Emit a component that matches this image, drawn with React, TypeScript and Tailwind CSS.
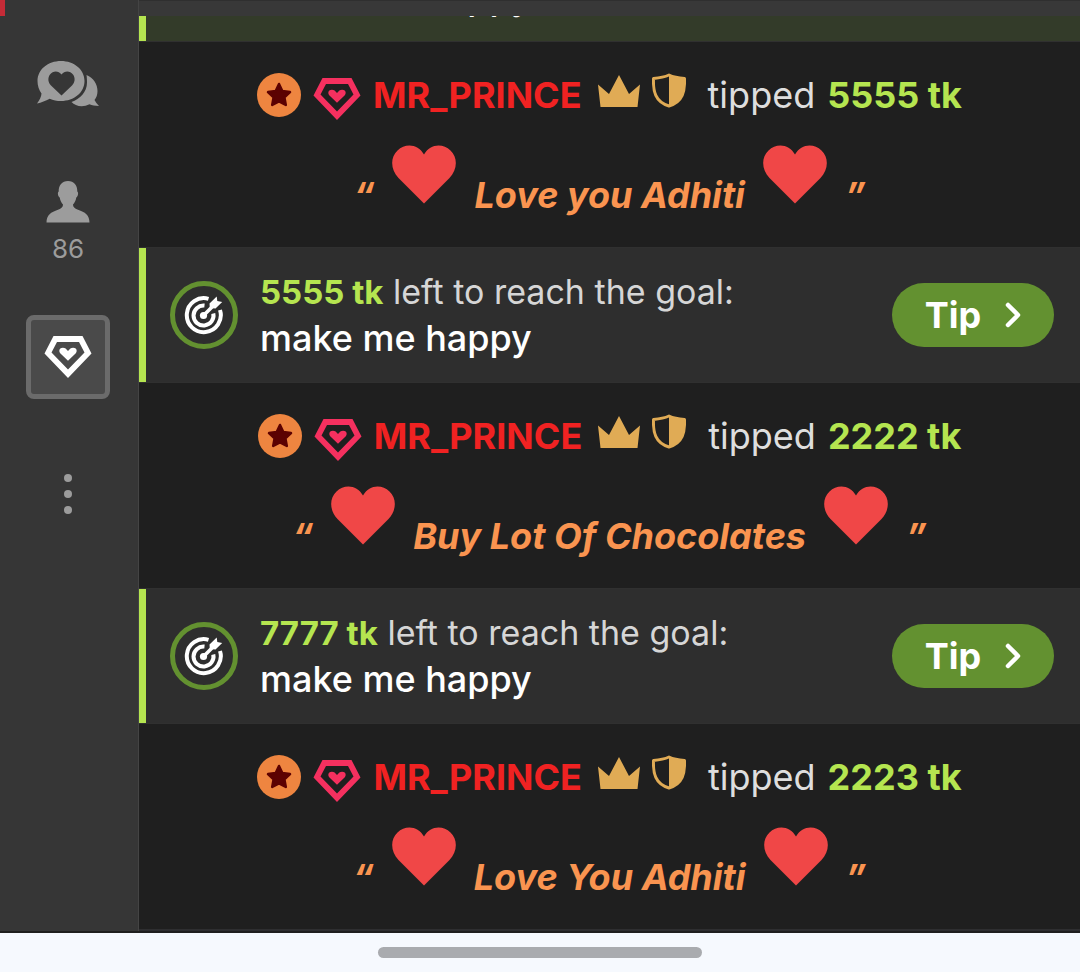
interface Tip {
  kind: "tip";
  id: number;
  user: string;
  amount: number;
  message: string;
}

interface Goal {
  kind: "goal";
  id: number;
  left: number;
  title: string;
  highlighted?: boolean;
}

type FeedItem = Tip | Goal;

const feed: FeedItem[] = [
  { kind: "goal", id: 1, left: 9999, title: "make me happy", highlighted: true },
  { kind: "tip", id: 2, user: "MR_PRINCE", amount: 5555, message: "Love you Adhiti" },
  { kind: "goal", id: 3, left: 5555, title: "make me happy" },
  { kind: "tip", id: 4, user: "MR_PRINCE", amount: 2222, message: "Buy Lot Of Chocolates" },
  { kind: "goal", id: 5, left: 7777, title: "make me happy" },
  { kind: "tip", id: 6, user: "MR_PRINCE", amount: 2223, message: "Love You Adhiti" },
];

function ChatIcon() {
  return (
    <svg width="62" height="46" viewBox="0 0 62 46" fill="currentColor" aria-hidden="true">
      <path d="M49.500 14C56.500 17 60.500 23 60.500 30C60.500 33.500 59.500 36.500 57.500 39C58.500 41 60 43 62 45C58 44.800 55 44.500 52.500 43.300C46 46.500 38.500 45.500 34.500 41C43 38 50 31 50 21.500C50 19 49.900 17 49.500 14Z" />
      <path
        fillRule="evenodd"
        d="M24 0C37 0 47.500 8.500 47.500 20C47.500 31.500 37 40 24 40C20 40 16 39.300 12.700 37.700C8.500 39.800 4.500 41.500 0 42.500C2.500 39 4.300 36 4.500 32.500C2 29 .500 25 .500 20C.500 8.500 11 0 24 0ZM24.500 34.500L35 24.500C38 21.500 38.500 17 36 13.500C33 9.500 27.500 9.500 24.500 13.500C21.500 9.500 16 9.500 13 13.500C10.500 17 11 21.500 14 24.500Z"
      />
    </svg>
  );
}

function UserIcon() {
  return (
    <svg width="44" height="42" viewBox="0 0 44 42" fill="currentColor" aria-hidden="true">
      <path d="M22 0C28 0 31.500 4.500 31.300 10.500C32.800 11.500 32 15.500 30.300 16.500C29.800 19.500 28.500 22 27 23.500C27 26 28.500 27.500 32 28.700C39 31 43.500 34 43.500 41.500H.500C.500 34 5 31 12 28.700C15.500 27.500 17 26 17 23.500C15.500 22 14.200 19.500 13.700 16.500C12 15.500 11.200 11.500 12.700 10.500C12.500 4.500 16 0 22 0Z" />
    </svg>
  );
}

function GemIcon({ className }: { className: string }) {
  return (
    <svg width="48" height="44" viewBox="0 0 48 44" fill="currentColor" className={className} aria-hidden="true">
      <path
        fillRule="evenodd"
        d="M9.500 1H38.500L47.500 18.500L24 43L.500 18.500ZM13 7L7.500 17.500L24 34.500L40.500 17.500L35 7Z"
      />
      <path d="M24 25.800L16.200 18.300C15 17 15 14.700 16.300 13.600C17.500 12.600 20.300 12.600 21.600 13.600L24 16L26.400 13.600C27.700 12.600 30.500 12.600 31.700 13.600C33 14.700 33 17 31.800 18.300Z" />
    </svg>
  );
}

function StarBadge() {
  return (
    <svg width="44" height="44" viewBox="0 0 44 44" aria-hidden="true">
      <circle cx="22" cy="22" r="22" fill="#ee8540" />
      <path
        d="M22 11L25.300 18L33 19L27.400 24.300L28.800 32L22 28.300L15.200 32L16.600 24.300L11 19L18.700 18Z"
        fill="#5c0202"
        stroke="#5c0202"
        strokeWidth="2.500"
        strokeLinejoin="round"
      />
    </svg>
  );
}

function CrownIcon() {
  return (
    <svg width="42" height="44" viewBox="0 0 42 44" fill="#e0ab55" aria-hidden="true">
      <path d="M0 11.500L11 21L21 2L31 21L42 11.500L39.500 34H2.500Z" />
    </svg>
  );
}

function ShieldIcon() {
  return (
    <svg width="34" height="44" viewBox="0 0 34 44" aria-hidden="true">
      <path
        d="M17 2C12 4.300 7 5 1.500 5.500C1 18 3 29 17 33C31 29 33 18 32.500 5.500C27 5 22 4.300 17 2Z"
        fill="none"
        stroke="#e0ab55"
        strokeWidth="3"
        strokeLinejoin="round"
      />
      <path d="M17 2C22 4.300 27 5 32.500 5.500C33 18 31 29 17 33Z" fill="#e0ab55" />
    </svg>
  );
}

function HeartIcon() {
  return (
    <svg width="64" height="59" viewBox="0 0 64 59" className="shrink-0 self-start" aria-hidden="true">
      <path
        d="M32 58.500L6.500 33C-1.500 24.500-2 12.500 5.500 5.500C13-2 26-1.500 32 9.500C38-1.500 51-2 58.500 5.500C66 12.500 65.500 24.500 57.500 33Z"
        fill="#f04747"
      />
    </svg>
  );
}

function TargetIcon() {
  return (
    <svg width="40" height="40" viewBox="0 0 40 40" fill="none" stroke="#fff" strokeWidth="4" aria-hidden="true">
      <path d="M24.500 3.800A17 17 0 1 0 36 15" />
      <path d="M20.500 10.600A10 10 0 1 0 29.300 18.500" />
      <circle cx="19.500" cy="20.500" r="3.600" fill="#fff" stroke="none" />
      <path d="M20 20L30 10" strokeWidth="3.500" />
      <path d="M25.800 13L25.500 8.500L32.700 1.500L33.300 6L38.200 7L31.500 13.500Z" fill="#fff" stroke="none" />
    </svg>
  );
}

function ChevronIcon() {
  return (
    <svg width="16" height="26" viewBox="0 0 16 26" fill="none" aria-hidden="true">
      <path d="M3 3L13 13L3 23" stroke="#fff" strokeWidth="4.500" strokeLinecap="round" strokeLinejoin="round" />
    </svg>
  );
}

function Sidebar() {
  return (
    <nav className="flex w-[139px] shrink-0 flex-col items-center border-r border-[#444444] bg-[#363636] pr-0.5 text-[#9c9c9c]">
      <div className="h-4 w-[5px] self-start bg-[#c52b37]" />
      <button type="button" aria-label="Chat" className="mt-[45px] flex">
        <ChatIcon />
      </button>
      <button type="button" aria-label="Users" className="mt-[74px] flex flex-col items-center">
        <UserIcon />
        <span className="mt-1.5 text-[26px] leading-10">86</span>
      </button>
      <button
        type="button"
        aria-label="Tips"
        className="mt-[46px] flex size-[84px] items-center justify-center rounded-lg border-5 border-[#6b6b6b] bg-[#4a4a4a]"
      >
        <GemIcon className="text-white" />
      </button>
      <button type="button" aria-label="More" className="mt-[75px] flex flex-col gap-2">
        <span className="size-2 rounded-full bg-[#9c9c9c]" />
        <span className="size-2 rounded-full bg-[#9c9c9c]" />
        <span className="size-2 rounded-full bg-[#9c9c9c]" />
      </button>
    </nav>
  );
}

function TipMessage({ tip }: { tip: Tip }) {
  return (
    <li className="shrink-0 pt-[31px] pb-[30px] text-[36px] leading-[44px]">
      <div className="flex h-11 justify-center">
        <StarBadge />
        <GemIcon className="mt-1 ml-3 text-[#f5305f]" />
        <span className="ml-3 font-bold text-[#f02222]">{tip.user}</span>
        <span className="ml-4 flex gap-3">
          <CrownIcon />
          <ShieldIcon />
        </span>
        <span className="ml-[22px] text-[#dedede]">tipped</span>
        <span className="ml-3 font-bold text-[#b5e550]">{tip.amount} tk</span>
      </div>
      <div className="mt-7 flex h-[72px] items-end justify-center gap-[18px] font-bold text-[#fa9450] italic">
        <span>“</span>
        <HeartIcon />
        <span>{tip.message}</span>
        <HeartIcon />
        <span>”</span>
      </div>
    </li>
  );
}

function GoalMessage({ goal }: { goal: Goal }) {
  return (
    <li
      className={`shrink-0 border-y border-[#303030] ${goal.highlighted ? "bg-[#333b29]" : "bg-[#2e2e2e]"}`}
    >
      <div className="flex items-center border-l-7 border-[#b5e550] py-[21px] pr-[26px] pl-6">
        <span className="flex size-[68px] shrink-0 items-center justify-center rounded-full border-5 border-[#639130]">
          <TargetIcon />
        </span>
        <div className="ml-[22px] flex-1 leading-[46px]">
          <p className="text-[34px] text-[#d6d6d6]">
            <span className="text-[33px] font-bold text-[#b5e550]">{goal.left} tk</span> left to reach the goal:
          </p>
          <p className="text-[36px] font-medium text-white">{goal.title}</p>
        </div>
        <button
          type="button"
          className="flex h-16 w-[162px] items-center justify-center gap-6 rounded-full bg-[#639130] text-[36px] font-bold text-white"
        >
          Tip
          <ChevronIcon />
        </button>
      </div>
    </li>
  );
}

export default function App() {
  return (
    <div className="flex h-screen flex-col bg-[#1f1f1f] font-['Inter',sans-serif]">
      <div className="flex min-h-0 flex-1">
        <Sidebar />
        <main className="flex min-w-0 flex-1 flex-col">
          <div className="h-4 shrink-0 border-t border-[#2f2f2f] bg-[#383838]" />
          <ul className="flex min-h-0 flex-1 flex-col justify-end overflow-hidden border-b-2 border-[#2e2e30]">
            {feed.map((item) =>
              item.kind === "tip" ? (
                <TipMessage key={item.id} tip={item} />
              ) : (
                <GoalMessage key={item.id} goal={item} />
              ),
            )}
          </ul>
        </main>
      </div>
      <footer className="mt-0.5 flex h-[39px] shrink-0 items-center justify-center bg-[#f6f9fe]">
        <div className="h-[11px] w-[30%] rounded-full bg-[#a9abaf]" />
      </footer>
    </div>
  );
}
